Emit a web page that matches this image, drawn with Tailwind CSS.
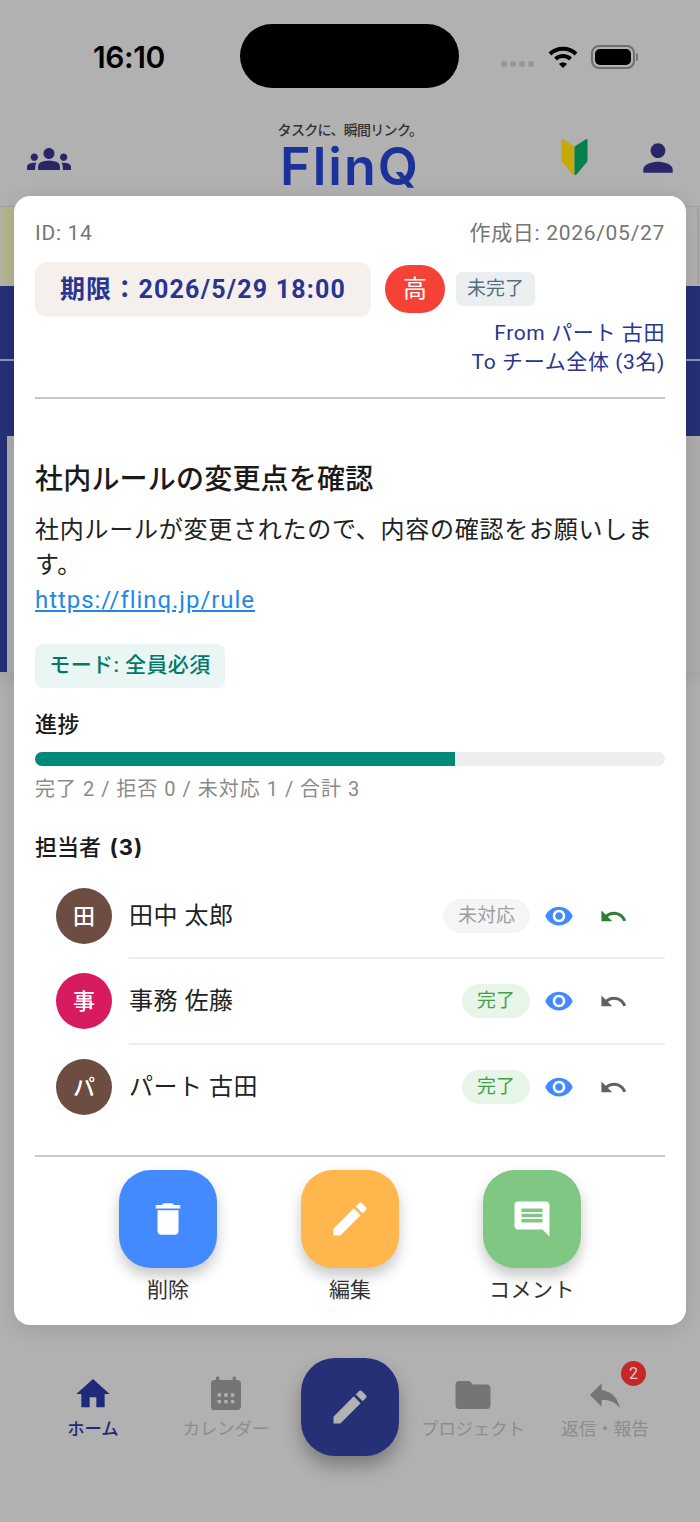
<!DOCTYPE html>
<html lang="ja">
<head>
    <meta charset="UTF-8">
    <meta name="viewport" content="width=device-width, initial-scale=1.0">
    <title>FlinQ</title>
    <script src="https://cdn.jsdelivr.net/npm/@tailwindcss/browser@4"></script>
</head>
<body class="bg-[#b1b1b1] font-['Roboto','Noto_Sans_CJK_JP',sans-serif]">
<div class="relative w-[700px] h-[1522px] overflow-hidden flex flex-col">

    <!-- Status bar -->
    <div class="relative h-[110px] shrink-0">
        <span class="absolute left-[93px] top-[38px] text-[30px] leading-[38px] font-semibold text-black font-['Inter'] tracking-[-0.4px]">16:10</span>
        <div class="absolute left-[240px] top-[24px] w-[219px] h-[64px] bg-black rounded-[32px]"></div>
        <div class="absolute left-[501px] top-[61px] flex gap-[3px]">
            <span class="w-[6px] h-[6px] rounded-full bg-[#979797]"></span>
            <span class="w-[6px] h-[6px] rounded-full bg-[#979797]"></span>
            <span class="w-[6px] h-[6px] rounded-full bg-[#979797]"></span>
            <span class="w-[6px] h-[6px] rounded-full bg-[#979797]"></span>
        </div>
        <svg class="absolute left-[548px] top-[45px]" width="30" height="24" viewBox="0 0 30 24" fill="none" stroke="#000" stroke-width="4">
            <path d="M2 9 C 9 2, 21 2, 28 9"/>
            <path d="M7.500 14 C 11.500 10, 18.500 10, 22.500 14"/>
            <path d="M11 19 L15 23 L19 19 C 17 17, 13 17, 11 19 Z" fill="#000" stroke="none"/>
        </svg>
        <div class="absolute left-[591px] top-[45px] w-[44px] h-[24px] rounded-[8px] border-2 border-[#6f6f6f] p-[2px]">
            <div class="w-full h-full bg-black rounded-[5px]"></div>
        </div>
        <div class="absolute left-[636px] top-[53px] w-[2px] h-[8px] bg-[#6f6f6f] rounded-r"></div>
    </div>

    <!-- App bar -->
    <div class="relative h-[96px] shrink-0">
        <svg class="absolute left-[27px] top-[27px]" width="44" height="44" viewBox="0 0 24 24" fill="#2a2566"><path d="M12 12.750c1.630 0 3.070.39 4.240.9 1.080.48 1.760 1.560 1.760 2.730V18H6v-1.610c0-1.180.68-2.260 1.760-2.730 1.170-.52 2.610-.91 4.240-.91zM4 13c1.100 0 2-.9 2-2s-.9-2-2-2-2 .9-2 2 .9 2 2 2zm1.130 1.100c-.37-.06-.74-.1-1.130-.1-.99 0-1.930.21-2.780.58C.48 14.900 0 15.620 0 16.430V18h4.500v-1.610c0-.83.23-1.610.63-2.290zM20 13c1.100 0 2-.9 2-2s-.9-2-2-2-2 .9-2 2 .9 2 2 2zm4 3.430c0-.81-.48-1.530-1.220-1.850-.85-.37-1.790-.58-2.780-.58-.39 0-.76.04-1.130.1.4.68.63 1.460.63 2.290V18H24v-1.570zM12 6c1.660 0 3 1.340 3 3s-1.340 3-3 3-3-1.340-3-3 1.340-3 3-3z"/></svg>
        <div class="absolute left-[240px] top-[10px] w-[220px] text-center text-[14px] leading-[20px] font-medium text-[#333] tracking-[-0.7px]">タスクに、瞬間リンク。</div>
        <div class="absolute left-[240px] top-[29px] w-[220px] text-center text-[52px] leading-[56px] font-semibold text-[#1c329a] font-['Inter'] tracking-[2px]">FlinQ</div>
        <svg class="absolute left-[561px] top-[28px]" width="27" height="38" viewBox="0 0 27 38" stroke-width="2" stroke-linejoin="round">
            <path d="M1.500 2 L12.500 9 V36 L1.500 23 Z" fill="#c4a90a" stroke="#c4a90a"/>
            <path d="M25.500 2 L14.500 9 V36 L25.500 23 Z" fill="#05804f" stroke="#05804f"/>
        </svg>
        <svg class="absolute left-[636px] top-[26px]" width="44" height="44" viewBox="0 0 24 24" fill="#2a2566"><path d="M12 12c2.210 0 4-1.790 4-4s-1.790-4-4-4-4 1.790-4 4 1.790 4 4 4zm0 2c-2.670 0-8 1.340-8 4v2h16v-2c0-2.660-5.330-4-8-4z"/></svg>
    </div>

    <!-- Dimmed list behind the dialog -->
    <div class="h-[80px] shrink-0 flex justify-between pt-[1px] pb-[2px] border-t border-[#a3a3a3]">
        <div class="ml-[1px] w-[15px] h-full bg-[#b5b58f] rounded-l-[4px]"></div>
        <div class="w-[2px] h-full bg-[#a2a2a2] mr-[1px]"></div>
    </div>
    <div class="h-[75px] shrink-0 bg-[#253077] border-b-2 border-[#8f93ad]"></div>
    <div class="h-[75px] shrink-0 bg-[#253077]"></div>
    <div class="h-[236px] shrink-0 bg-[#adadad]"><div class="w-[7px] h-full bg-[#253077]"></div></div>
    <div class="h-[20px] shrink-0 bg-linear-to-b from-[#a8a8a8] to-[#b1b1b1]"></div>

    <!-- Bottom nav -->
    <div class="absolute left-0 top-[1358px] w-full h-[98px] flex">
        <div class="w-[186px] flex justify-center">
            <div class="w-[90px] flex flex-col items-center pt-[16px]">
                <svg width="40" height="40" viewBox="0 0 24 24" fill="#1f2a78"><path d="M10 20v-6h4v6h5v-8h3L12 3 2 12h3v8z"/></svg>
                <span class="text-[17.3px] leading-[24px] mt-[3px] font-medium text-[#1f2a78] whitespace-nowrap">ホーム</span>
            </div>
        </div>
        <div class="w-[80px] flex flex-col items-center pt-[16px]">
            <svg class="mt-[1px]" width="40" height="40" viewBox="0 0 24 24" fill="#757575"><path fill-rule="evenodd" d="M19 3h-1V1h-2v2H8V1H6v2H5c-1.110 0-1.990.9-1.990 2L3 19a2 2 0 0 0 2 2h14c1.100 0 2-.9 2-2V5c0-1.100-.9-2-2-2zM7 11h2v2H7zM11 11h2v2h-2zM15 11h2v2h-2zM7 15h2v2H7zM11 15h2v2h-2zM15 15h2v2h-2z"/></svg>
            <span class="text-[17.3px] leading-[24px] mt-[2px] text-[#8c8c8c] whitespace-nowrap">カレンダー</span>
        </div>
        <div class="ml-[35px] w-[98px] h-[98px] bg-[#253077] rounded-[34px] shadow-[0_10px_18px_rgba(0,0,0,0.3)] flex items-center justify-center">
            <svg width="44" height="44" viewBox="0 0 24 24" fill="#b2b2b2"><path d="M3 17.250V21h3.750L17.810 9.940l-3.750-3.750L3 17.250zM20.710 7.040c.39-.39.39-1.020 0-1.410l-2.340-2.340c-.39-.39-1.020-.39-1.410 0l-1.830 1.830 3.750 3.750 1.830-1.830z"/></svg>
        </div>
        <div class="ml-[34px] w-[80px] flex flex-col items-center pt-[16px]">
            <svg width="42" height="42" viewBox="0 0 24 24" fill="#757575"><path d="M10 4H4c-1.100 0-1.990.9-1.990 2L2 18c0 1.100.9 2 2 2h16c1.100 0 2-.9 2-2V8c0-1.100-.9-2-2-2h-8l-2-2z"/></svg>
            <span class="text-[17.3px] leading-[24px] mt-[1px] text-[#8c8c8c] whitespace-nowrap">プロジェクト</span>
        </div>
        <div class="relative ml-[52px] w-[80px] flex flex-col items-center pt-[17px]">
            <svg width="40" height="40" viewBox="0 0 24 24" fill="#757575"><path d="M10 9V5l-7 7 7 7v-4.100c5 0 8.500 1.600 11 5.100-1-5-4-10-11-11z"/></svg>
            <span class="text-[17.5px] leading-[24px] mt-[2px] text-[#8c8c8c] whitespace-nowrap">返信・報告</span>
            <span class="absolute left-[56px] top-[3px] w-[25px] h-[25px] rounded-full bg-[#c62828] text-[#e8c8c8] text-[16px] leading-[25px] text-center">2</span>
        </div>
    </div>

    <!-- Task dialog -->
    <div class="absolute left-[14px] top-[196px] w-[672px] h-[1129px] bg-white rounded-[16px] px-[21px] pt-[23px] shadow-[0_4px_20px_rgba(0,0,0,0.12)] flex flex-col">
        <div class="flex justify-between text-[21px] leading-[28px] text-[#757575] tracking-[0.7px]">
            <span>ID: 14</span>
            <span>作成日: 2026/05/27</span>
        </div>
        <div class="flex items-center mt-[15px] h-[55px]">
            <div class="w-[336px] h-[55px] bg-[#f5f0eb] rounded-[12px] flex items-center justify-center text-[25px] font-bold text-[#283593] tracking-[1.200px] whitespace-nowrap">期限：2026/5/29 18:00</div>
            <div class="ml-[14px] w-[60px] h-[48px] mb-[1px] bg-[#f44336] rounded-[24px] flex items-center justify-center text-[24px] text-white">高</div>
            <div class="ml-[11px] w-[79px] h-[34px] mb-[1px] bg-[#eceff1] rounded-[6px] flex items-center justify-center text-[19px] text-[#546e7a]">未完了</div>
        </div>
        <div class="mt-[2px] text-right text-[21px] leading-[29px] text-[#283593] tracking-[0.6px]">
            <div>From パート 古田</div>
            <div>To チーム全体 (3名)</div>
        </div>
        <div class="mt-[20px] h-[2px] bg-[#c8c8c8]"></div>

        <h2 class="mt-[63px] text-[28px] leading-[36px] font-medium text-[#1a1a1a] tracking-[0.2px]">社内ルールの変更点を確認</h2>
        <p class="mt-[15px] text-[24px] leading-[35px] text-[#222] tracking-[0.75px]">社内ルールが変更されたので、内容の確認をお願いします。<br><a href="#" class="text-[#1e88e5] underline tracking-[0.95px]">https://flinq.jp/rule</a></p>

        <div class="mt-[26px] w-[190px] h-[44px] bg-[#eaf6f4] rounded-[8px] flex items-center justify-center text-[21px] font-medium text-[#00796b] tracking-[0.4px] whitespace-nowrap">モード: 全員必須</div>

        <div class="mt-[21px] text-[22px] leading-[32px] font-medium text-[#1a1a1a] tracking-[0.5px]">進捗</div>
        <div class="mt-[11px] h-[14px] bg-[#eeeeee] rounded-full overflow-hidden">
            <div class="w-[420px] h-full bg-[#00897b]"></div>
        </div>
        <div class="mt-[9px] text-[20px] leading-[28px] text-[#8a8a8a] tracking-[1px]">完了 2 / 拒否 0 / 未対応 1 / 合計 3</div>
        <div class="mt-[28px] text-[22px] leading-[32px] font-medium text-[#1a1a1a]">担当者 <span class="ml-[3px] font-bold font-['Inter'] tracking-[1px]">(3)</span></div>

        <div class="mt-[9px]">
            <div class="flex items-center h-[86px]">
                <div class="ml-[21px] w-[56px] h-[56px] rounded-full bg-[#6d4c41] flex items-center justify-center text-[22px] font-medium text-white">田</div>
                <div class="ml-[17px] flex-1 h-full flex items-center border-b-2 border-[#eeeeee] pt-[2px] pr-[37px]">
                    <span class="flex-1 text-[24px] text-[#222] tracking-[0.5px]">田中 太郎</span>
                    <span class="w-[87px] h-[34px] rounded-full bg-[#f5f5f5] flex items-center justify-center text-[19px] text-[#9e9e9e]">未対応</span>
                    <svg class="ml-[14px]" width="30" height="30" viewBox="0 0 24 24" fill="#448aff"><path d="M12 4.500C7 4.500 2.730 7.610 1 12c1.730 4.390 6 7.500 11 7.500s9.270-3.110 11-7.500c-1.730-4.390-6-7.500-11-7.500zM12 17c-2.760 0-5-2.240-5-5s2.240-5 5-5 5 2.240 5 5-2.240 5-5 5zm0-8c-1.660 0-3 1.340-3 3s1.340 3 3 3 3-1.340 3-3-1.340-3-3-3z"/></svg>
                    <svg class="ml-[25px]" width="29" height="29" viewBox="0 0 24 24" fill="#2e7d32"><path d="M12.500 8c-2.650 0-5.050.99-6.900 2.600L2 7v9h9l-3.620-3.620c1.390-1.160 3.160-1.880 5.120-1.880 3.540 0 6.550 2.310 7.600 5.500l2.370-.78C21.080 11.030 17.150 8 12.500 8z"/></svg>
                </div>
            </div>
            <div class="flex items-center h-[86px]">
                <div class="ml-[21px] mb-[2px] w-[56px] h-[56px] rounded-full bg-[#d81b60] flex items-center justify-center text-[22px] font-medium text-white">事</div>
                <div class="ml-[17px] flex-1 h-full flex items-center border-b-2 border-[#eeeeee] pr-[37px]">
                    <span class="flex-1 text-[24px] text-[#222] tracking-[0.5px]">事務 佐藤</span>
                    <span class="w-[68px] h-[34px] rounded-full bg-[#e8f5e9] flex items-center justify-center text-[19px] text-[#43a047]">完了</span>
                    <svg class="ml-[14px]" width="30" height="30" viewBox="0 0 24 24" fill="#448aff"><path d="M12 4.500C7 4.500 2.730 7.610 1 12c1.730 4.390 6 7.500 11 7.500s9.270-3.110 11-7.500c-1.730-4.390-6-7.500-11-7.500zM12 17c-2.760 0-5-2.240-5-5s2.240-5 5-5 5 2.240 5 5-2.240 5-5 5zm0-8c-1.660 0-3 1.340-3 3s1.340 3 3 3 3-1.340 3-3-1.340-3-3-3z"/></svg>
                    <svg class="ml-[25px]" width="29" height="29" viewBox="0 0 24 24" fill="#616161"><path d="M12.500 8c-2.650 0-5.050.99-6.900 2.600L2 7v9h9l-3.620-3.620c1.390-1.160 3.160-1.880 5.120-1.880 3.540 0 6.550 2.310 7.600 5.500l2.370-.78C21.080 11.030 17.150 8 12.500 8z"/></svg>
                </div>
            </div>
            <div class="flex items-center h-[84px]">
                <div class="ml-[21px] w-[56px] h-[56px] rounded-full bg-[#6d4c41] flex items-center justify-center text-[22px] font-medium text-white">パ</div>
                <div class="ml-[17px] flex-1 h-full flex items-center pr-[37px]">
                    <span class="flex-1 text-[24px] text-[#222] tracking-[0.5px]">パート 古田</span>
                    <span class="w-[68px] h-[34px] rounded-full bg-[#e8f5e9] flex items-center justify-center text-[19px] text-[#43a047]">完了</span>
                    <svg class="ml-[14px]" width="30" height="30" viewBox="0 0 24 24" fill="#448aff"><path d="M12 4.500C7 4.500 2.730 7.610 1 12c1.730 4.390 6 7.500 11 7.500s9.270-3.110 11-7.500c-1.730-4.390-6-7.500-11-7.500zM12 17c-2.760 0-5-2.240-5-5s2.240-5 5-5 5 2.240 5 5-2.240 5-5 5zm0-8c-1.660 0-3 1.340-3 3s1.340 3 3 3 3-1.340 3-3-1.340-3-3-3z"/></svg>
                    <svg class="ml-[25px]" width="29" height="29" viewBox="0 0 24 24" fill="#616161"><path d="M12.500 8c-2.650 0-5.050.99-6.900 2.600L2 7v9h9l-3.620-3.620c1.390-1.160 3.160-1.880 5.120-1.880 3.540 0 6.550 2.310 7.600 5.500l2.370-.78C21.080 11.030 17.150 8 12.500 8z"/></svg>
                </div>
            </div>
        </div>

        <div class="mt-[26px] h-[2px] bg-[#c8c8c8]"></div>

        <!-- Actions -->
        <div class="mt-[13px] flex justify-center gap-[84px]">
            <div class="w-[98px] flex flex-col items-center">
                <div class="w-[98px] h-[98px] rounded-[32px] bg-[#448aff] shadow-[0_8px_14px_rgba(0,0,0,0.22)] flex items-center justify-center">
                    <svg width="42" height="42" viewBox="0 0 24 24" fill="#fff"><path d="M6 19c0 1.100.9 2 2 2h8c1.100 0 2-.9 2-2V7H6v12zM19 4h-3.500l-1-1h-5l-1 1H5v2h14V4z"/></svg>
                </div>
                <span class="mt-[8px] text-[21px] leading-[28px] text-[#333] whitespace-nowrap">削除</span>
            </div>
            <div class="w-[98px] flex flex-col items-center">
                <div class="w-[98px] h-[98px] rounded-[32px] bg-[#ffb74d] shadow-[0_8px_14px_rgba(0,0,0,0.22)] flex items-center justify-center">
                    <svg width="44" height="44" viewBox="0 0 24 24" fill="#fff"><path d="M3 17.250V21h3.750L17.810 9.940l-3.750-3.750L3 17.250zM20.710 7.040c.39-.39.39-1.020 0-1.410l-2.340-2.340c-.39-.39-1.020-.39-1.410 0l-1.830 1.830 3.750 3.750 1.830-1.830z"/></svg>
                </div>
                <span class="mt-[8px] text-[21px] leading-[28px] text-[#333] whitespace-nowrap">編集</span>
            </div>
            <div class="w-[98px] flex flex-col items-center">
                <div class="w-[98px] h-[98px] rounded-[32px] bg-[#81c784] shadow-[0_8px_14px_rgba(0,0,0,0.22)] flex items-center justify-center">
                    <svg width="42" height="42" viewBox="0 0 24 24" fill="#fff"><path d="M21.990 4c0-1.100-.89-2-1.990-2H4c-1.100 0-2 .9-2 2v12c0 1.100.9 2 2 2h14l4 4-.01-18zM18 14H6v-2h12v2zm0-3H6V9h12v2zm0-3H6V6h12v2z"/></svg>
                </div>
                <span class="mt-[8px] text-[21px] leading-[28px] text-[#333] whitespace-nowrap tracking-[0.5px]">コメント</span>
            </div>
        </div>
    </div>
</div>
</body>
</html>
